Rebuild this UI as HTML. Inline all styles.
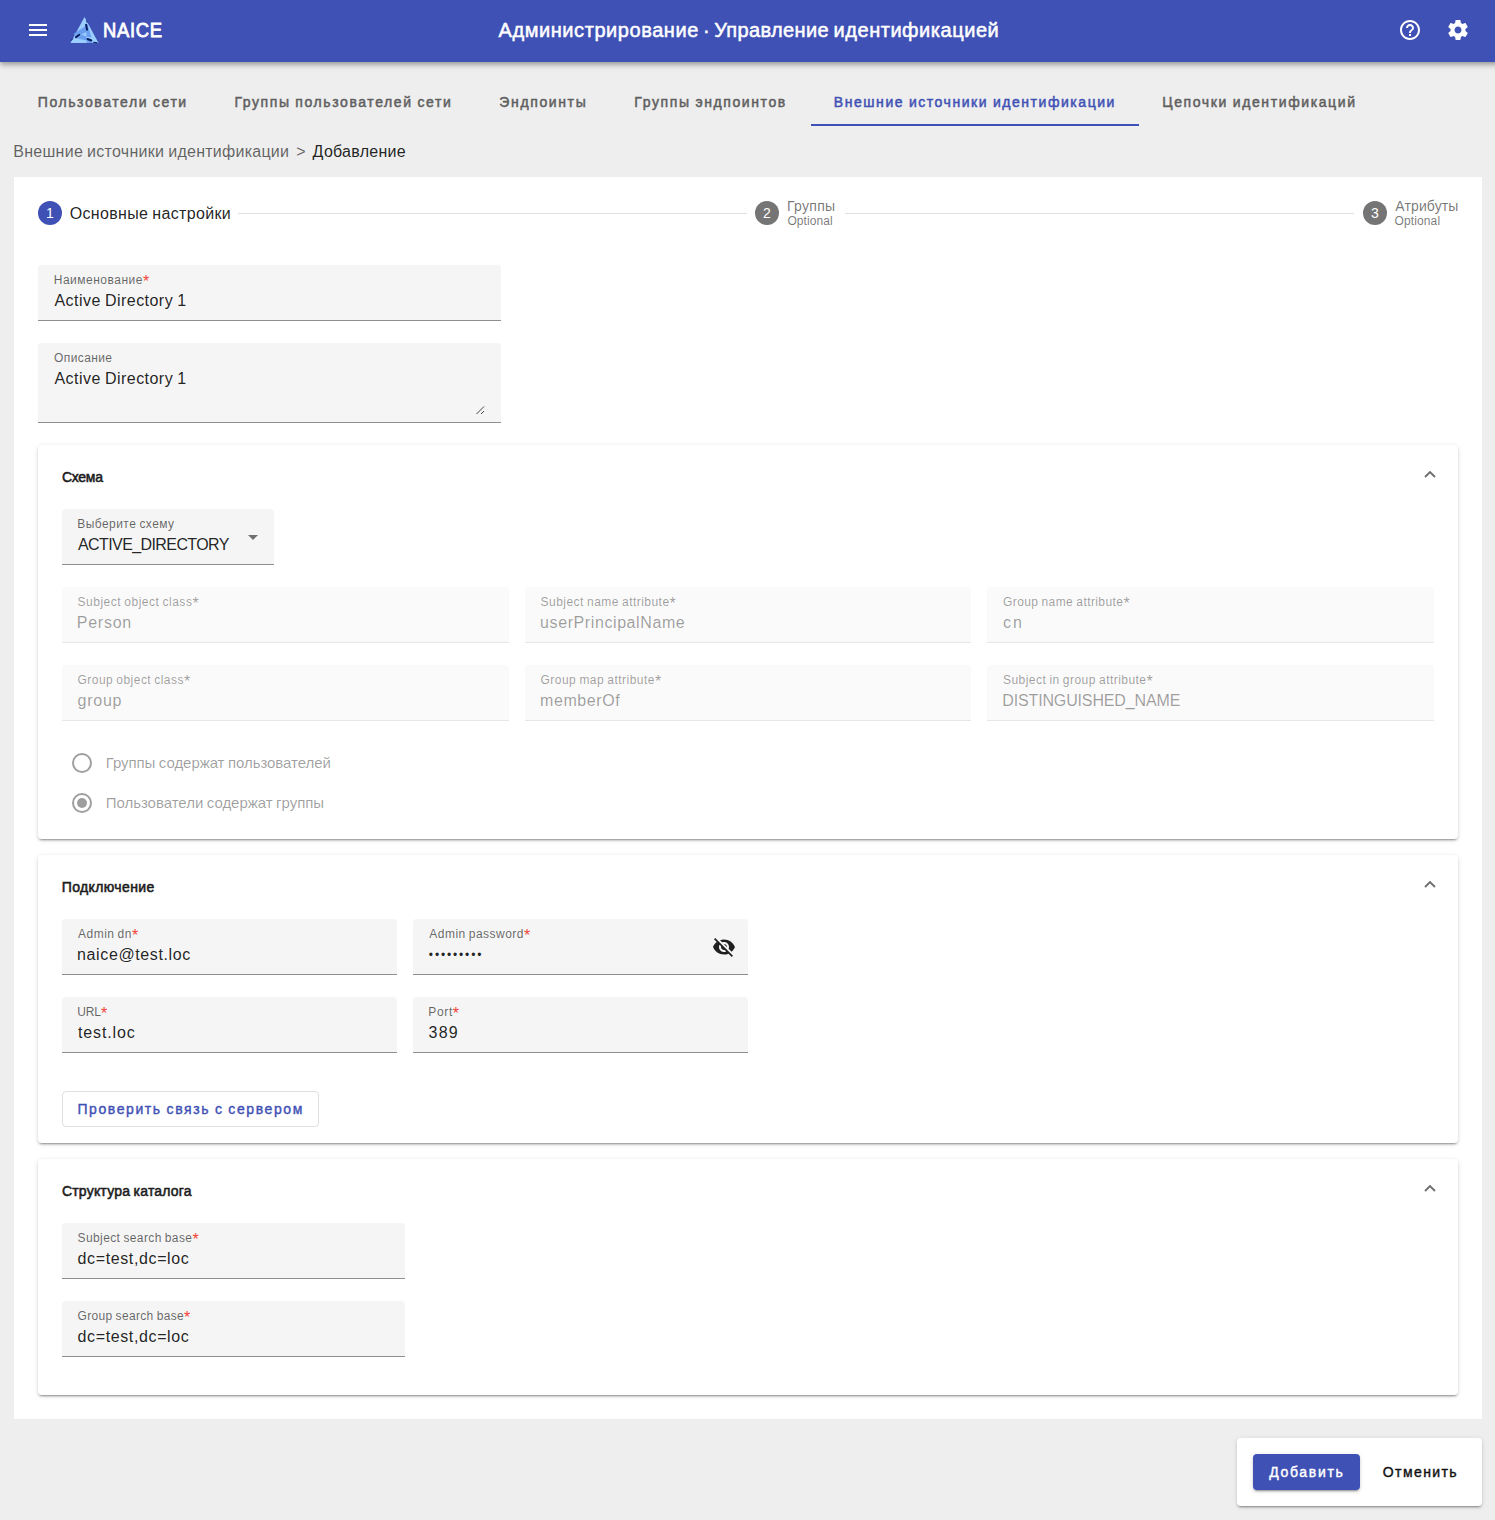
<!DOCTYPE html>
<html lang="ru">
<head>
<meta charset="utf-8">
<title>NAICE</title>
<style>
*{box-sizing:border-box;margin:0;padding:0}
html,body{width:1495px;height:1520px;overflow:hidden}
body{background:#eeeeee;font-family:"Liberation Sans",sans-serif;color:rgba(0,0,0,.87);position:relative;font-size:16px;word-spacing:-.04em}
.abs{position:absolute}
.t{position:absolute;white-space:nowrap;line-height:20px}
/* header */
#hdr{left:0;top:0;width:1530px;height:62px;background:#3f51b5;box-shadow:0 2px 4px -1px rgba(0,0,0,.2),0 3.5px 4.5px 0 rgba(0,0,0,.14),0 1px 9px 0 rgba(0,0,0,.12)}
#hdr .t{color:#fff;-webkit-text-stroke:.5px #fff;font-size:20px;line-height:24px}
/* tabs */
.tab{color:#5f5f5f;-webkit-text-stroke:.5px #5f5f5f;font-size:14px;letter-spacing:1.1px;top:92px}
.tab.act{color:#3f51b5;-webkit-text-stroke-color:#3f51b5}
#ink{left:811px;top:124px;width:328px;height:2px;background:#3f51b5}
/* crumbs */
.crumb{font-size:16px;top:142px;color:rgba(0,0,0,.6)}
/* card */
#card{left:14px;top:177px;width:1468px;height:1242px;background:#fff}
.panel{position:absolute;left:38px;width:1420px;background:#fff;border-radius:4px;box-shadow:0 3px 1px -2px rgba(0,0,0,.2),0 2px 2px 0 rgba(0,0,0,.14),0 1px 5px 0 rgba(0,0,0,.12)}
.ptitle{font-size:14px;color:#1c1c1c;-webkit-text-stroke:.55px #1c1c1c}
/* fields */
.f{position:absolute;height:56px;background:#f5f5f5;border-radius:4px 4px 0 0;border-bottom:1px solid rgba(0,0,0,.42)}
.f.dis{background:#fafafa;border-bottom-color:rgba(0,0,0,.08)}
.f .l{position:absolute;left:16px;top:7px;font-size:12px;line-height:16px;color:rgba(0,0,0,.6);white-space:nowrap;letter-spacing:.2px}
.f .l i{font-style:normal;color:#f44336;font-size:16px;line-height:0;position:relative;top:3px}
.f .v{position:absolute;left:16px;top:26px;font-size:16px;line-height:20px;color:rgba(0,0,0,.87);white-space:nowrap}
.f.dis .l,.f.dis .v,.f.dis .l i{color:rgba(0,0,0,.38)}
/* stepper */
.circ{position:absolute;width:24px;height:24px;border-radius:50%;color:#fff;font-size:14px;line-height:24px;text-align:center}
.sline{position:absolute;height:1px;background:#e0e0e0;top:213px}
/* radio */
.radio{position:absolute;width:20px;height:20px;border-radius:50%;border:2px solid rgba(0,0,0,.38)}
.rl{font-size:15px;color:rgba(0,0,0,.38);letter-spacing:.2px}
/*FIT*/
#brand{letter-spacing:0.743px;margin-left:-1.00px}
#tab1{letter-spacing:1.579px;margin-left:-0.25px}
#tab2{letter-spacing:1.580px;margin-left:-0.60px}
#tab3{letter-spacing:1.625px;margin-left:0.35px}
#tab4{letter-spacing:1.599px;margin-left:-0.65px}
#tab5{letter-spacing:1.543px;margin-left:-1.15px}
#tab6{letter-spacing:1.604px;margin-left:-0.75px}
#cr1{letter-spacing:0.260px;margin-left:-0.70px}
#cr2{letter-spacing:0.000px;margin-left:0.25px}
#cr3{letter-spacing:0.265px;margin-left:-0.40px}
#st1{letter-spacing:0.322px;margin-left:-0.25px}
#st2{letter-spacing:0.306px;margin-left:-0.05px}
#st2o{letter-spacing:0.059px;margin-left:0.45px}
#st3{letter-spacing:0.108px;margin-left:0.35px}
#st3o{letter-spacing:0.109px;margin-left:-0.40px}
#l_name{letter-spacing:0.494px;margin-left:-0.25px}
#v_name{letter-spacing:0.450px;margin-left:0.50px}
#l_desc{letter-spacing:0.405px;margin-left:0.00px}
#v_desc{letter-spacing:0.450px;margin-left:0.50px}
#pt1{letter-spacing:-0.281px;margin-left:-0.05px}
#l_sel{letter-spacing:0.439px;margin-left:-0.70px}
#v_sel{letter-spacing:-0.597px;margin-left:0.05px}
#l_soc{letter-spacing:0.502px;margin-left:-0.45px}
#v_soc{letter-spacing:0.738px;margin-left:-1.20px}
#l_sna{letter-spacing:0.464px;margin-left:-0.45px}
#v_sna{letter-spacing:0.593px;margin-left:-0.95px}
#l_gna{letter-spacing:0.413px;margin-left:0.00px}
#v_gna{letter-spacing:1.890px;margin-left:0.00px}
#l_goc{letter-spacing:0.458px;margin-left:-0.45px}
#v_goc{letter-spacing:0.755px;margin-left:-0.45px}
#l_gma{letter-spacing:0.467px;margin-left:-0.45px}
#v_gma{letter-spacing:0.584px;margin-left:-0.95px}
#l_sga{letter-spacing:0.462px;margin-left:0.00px}
#v_sga{letter-spacing:-0.141px;margin-left:-0.75px}
#r1{letter-spacing:-0.051px;margin-left:-0.35px}
#r2{letter-spacing:-0.025px;margin-left:-0.35px}
#pt2{letter-spacing:0.386px;margin-left:-0.30px}
#l_adn{letter-spacing:0.471px;margin-left:0.05px}
#v_adn{letter-spacing:0.618px;margin-left:-0.95px}
#l_apw{letter-spacing:0.461px;margin-left:0.35px}
#v_apw{letter-spacing:1.839px;margin-left:-0.15px}
#l_url{letter-spacing:-0.145px;margin-left:-0.70px}
#v_url{letter-spacing:0.847px;margin-left:0.05px}
#l_port{letter-spacing:0.615px;margin-left:-0.65px}
#v_port{letter-spacing:1.194px;margin-left:-0.40px}
#t_chk{letter-spacing:1.587px;margin-left:-0.60px}
#pt3{letter-spacing:0.197px;margin-left:-0.05px}
#l_ssb{letter-spacing:0.387px;margin-left:-0.45px}
#v_ssb{letter-spacing:0.621px;margin-left:-0.45px}
#l_gsb{letter-spacing:0.332px;margin-left:-0.45px}
#v_gsb{letter-spacing:0.621px;margin-left:-0.45px}
#t_add{letter-spacing:1.683px;margin-left:0.20px}
#t_cancel{letter-spacing:1.421px;margin-left:-0.25px}
#ti_a{letter-spacing:0.568px;margin-left:0.55px}
#ti_d{letter-spacing:0.000px;margin-left:0.10px}
#ti_b{letter-spacing:0.365px;margin-left:0.15px}
#ti_c{letter-spacing:0.536px;margin-left:-0.45px}
/*ENDFIT*/
</style>
</head>
<body>
<div id="hdr" class="abs">
  <svg class="abs" style="left:26px;top:18px" width="24" height="24" viewBox="0 0 24 24"><path fill="#fff" d="M3 18h18v-2H3v2zm0-5h18v-2H3v2zm0-7v2h18V6H3z"/></svg>
  <svg class="abs" id="logo" style="left:66px;top:12px" width="38" height="36" viewBox="0 0 38 36">
    <polygon points="18.5,5 32.5,30.9 4.45,30.9" fill="#9bcdff"/>
    <polygon points="19.3,14.2 20.3,20.1 15.3,22.4 7.6,21.7" fill="#6a9ff0"/>
    <polygon points="21.2,11.2 25.4,25.6 20.6,24.4 20.3,20.1" fill="#6a9ff0"/>
    <polygon points="15.3,22.4 12.2,26.7 20.8,28.6 20.8,30.9 27,30.9 21,26.7 20.6,24.4" fill="#6a9ff0"/>
    <polygon points="7.6,21.7 15.3,22.4 12.2,26.7 9,25.8" fill="#6a9ff0" opacity=".7"/>
    <g stroke="#041a5e" fill="none" stroke-linecap="round">
      <path d="M20.4 8.8L21.1 10.4M5.1 28.2L7.1 26.6" stroke-width="1" opacity=".75"/>
      <path d="M20.1 12.8L21 17.8M10 25.1L13.3 22.8M21.6 27L25.3 28.5" stroke-width="2"/>
      <path d="M27.6 30.3L31 30.7" stroke-width="1.1"/>
    </g>
  </svg>
  <span class="t" id="brand" style="left:104px;top:18px;transform:scaleX(.92);transform-origin:0 0;-webkit-text-stroke:.8px #fff">NAICE</span>
  <span class="t" id="ti_a" style="left:498px;top:18px">Администрирование</span>
  <span class="t" id="ti_d" style="left:703px;top:18px">·</span>
  <span class="t" id="ti_b" style="left:714px;top:18px">Управление</span>
  <span class="t" id="ti_c" style="left:834px;top:18px">идентификацией</span>
  <svg class="abs" style="left:1398px;top:18px" width="24" height="24" viewBox="0 0 24 24"><path fill="#fff" d="M11 18h2v-2h-2v2zm1-16C6.48 2 2 6.48 2 12s4.48 10 10 10 10-4.480 10-10S17.52 2 12 2zm0 18c-4.410 0-8-3.590-8-8s3.590-8 8-8 8 3.590 8 8-3.590 8-8 8zm0-14c-2.210 0-4 1.790-4 4h2c0-1.100.9-2 2-2s2 .9 2 2c0 2-3 1.750-3 5h2c0-2.250 3-2.500 3-5 0-2.210-1.790-4-4-4z"/></svg>
  <svg class="abs" style="left:1446px;top:18px" width="24" height="24" viewBox="0 0 24 24"><path fill="#fff" d="M19.43 12.98c.04-.32.07-.64.07-.98s-.03-.66-.07-.98l2.11-1.650c.19-.15.24-.42.12-.64l-2-3.460c-.12-.22-.39-.3-.61-.22l-2.49 1c-.52-.4-1.080-.73-1.690-.98l-.38-2.650C14.46 2.18 14.25 2 14 2h-4c-.25 0-.46.18-.49.42l-.38 2.650c-.61.25-1.170.59-1.690.98l-2.490-1c-.23-.09-.49 0-.61.22l-2 3.460c-.13.22-.07.49.12.64l2.110 1.650c-.04.32-.07.65-.07.98s.03.66.07.98l-2.110 1.650c-.19.15-.24.42-.12.64l2 3.460c.12.22.39.3.61.22l2.490-1c.52.4 1.080.73 1.690.98l.38 2.650c.03.24.24.42.49.42h4c.25 0 .46-.18.49-.42l.38-2.650c.61-.25 1.170-.59 1.690-.98l2.490 1c.23.09.49 0 .61-.22l2-3.460c.12-.22.07-.49-.12-.64l-2.110-1.650zM12 15.500c-1.930 0-3.500-1.570-3.500-3.500s1.570-3.500 3.500-3.500 3.500 1.570 3.500 3.500-1.570 3.500-3.500 3.500z"/></svg>
</div>

<span class="t tab" id="tab1" style="left:38px">Пользователи сети</span>
<span class="t tab" id="tab2" style="left:235px">Группы пользователей сети</span>
<span class="t tab" id="tab3" style="left:499px">Эндпоинты</span>
<span class="t tab" id="tab4" style="left:635px">Группы эндпоинтов</span>
<span class="t tab act" id="tab5" style="left:835px">Внешние источники идентификации</span>
<span class="t tab" id="tab6" style="left:1163px">Цепочки идентификаций</span>
<div id="ink" class="abs"></div>

<span class="t crumb" id="cr1" style="left:14px">Внешние источники идентификации</span>
<span class="t crumb" id="cr2" style="left:296px">&gt;</span>
<span class="t crumb" id="cr3" style="left:313px;color:rgba(0,0,0,.87)">Добавление</span>

<div id="card" class="abs"></div>
<div class="circ" id="c1" style="left:38px;top:201px;background:#3f51b5">1</div>
<span class="t" id="st1" style="left:70px;top:204px;font-size:16px">Основные настройки</span>
<div class="sline" style="left:238px;width:509px"></div>
<div class="circ" id="c2" style="left:755px;top:201px;background:#757575">2</div>
<span class="t" id="st2" style="left:787px;top:198px;font-size:14px;line-height:16px;color:rgba(0,0,0,.54)">Группы</span>
<span class="t" id="st2o" style="left:787px;top:214px;font-size:12px;line-height:14px;color:rgba(0,0,0,.54)">Optional</span>
<div class="sline" style="left:845px;width:509px"></div>
<div class="circ" id="c3" style="left:1363px;top:201px;background:#757575">3</div>
<span class="t" id="st3" style="left:1395px;top:198px;font-size:14px;line-height:16px;color:rgba(0,0,0,.54)">Атрибуты</span>
<span class="t" id="st3o" style="left:1395px;top:214px;font-size:12px;line-height:14px;color:rgba(0,0,0,.54)">Optional</span>

<div class="f" style="left:38px;top:265px;width:463px"><span class="l" id="l_name">Наименование<i>*</i></span><span class="v" id="v_name">Active Directory 1</span></div>
<div class="f" style="left:38px;top:343px;width:463px;height:80px"><span class="l" id="l_desc">Описание</span><span class="v" id="v_desc">Active Directory 1</span>
<svg class="abs" style="left:437px;top:62px" width="10" height="10" viewBox="0 0 10 10"><path d="M1.5 9 L9 1.5 M6 9 L9 6" stroke="#444" stroke-width="1" fill="none"/></svg></div>

<div class="panel" id="p1" style="top:445px;height:394px">
<span class="t ptitle" id="pt1" style="left:24px;top:22px">Схема</span>
<svg class="abs" style="left:1386px;top:25px" width="12" height="8" viewBox="0 0 12 8"><path fill="none" stroke="#6e6e6e" stroke-width="1.9" d="M1 7L6 2L11 7"/></svg>
<div class="f" style="left:24px;top:64px;width:212px"><span class="l" id="l_sel">Выберите схему</span><span class="v" id="v_sel">ACTIVE_DIRECTORY</span>
<svg class="abs" style="left:186px;top:26px" width="10" height="5" viewBox="0 0 10 5"><path d="M0 0l5 5 5-5z" fill="rgba(0,0,0,.54)"/></svg></div>
<div class="f dis" style="left:24px;top:142px;width:447px"><span class="l" id="l_soc">Subject object class<i>*</i></span><span class="v" id="v_soc">Person</span></div>
<div class="f dis" style="left:487px;top:142px;width:446px"><span class="l" id="l_sna">Subject name attribute<i>*</i></span><span class="v" id="v_sna">userPrincipalName</span></div>
<div class="f dis" style="left:949px;top:142px;width:447px"><span class="l" id="l_gna">Group name attribute<i>*</i></span><span class="v" id="v_gna">cn</span></div>
<div class="f dis" style="left:24px;top:220px;width:447px"><span class="l" id="l_goc">Group object class<i>*</i></span><span class="v" id="v_goc">group</span></div>
<div class="f dis" style="left:487px;top:220px;width:446px"><span class="l" id="l_gma">Group map attribute<i>*</i></span><span class="v" id="v_gma">memberOf</span></div>
<div class="f dis" style="left:949px;top:220px;width:447px"><span class="l" id="l_sga">Subject in group attribute<i>*</i></span><span class="v" id="v_sga">DISTINGUISHED_NAME</span></div>
<div class="radio" style="left:34px;top:308px"></div>
<span class="t rl" id="r1" style="left:68px;top:308px">Группы содержат пользователей</span>
<div class="radio" style="left:34px;top:348px"><div style="position:absolute;left:3px;top:3px;width:10px;height:10px;border-radius:50%;background:rgba(0,0,0,.38)"></div></div>
<span class="t rl" id="r2" style="left:68px;top:348px">Пользователи содержат группы</span>
</div>

<div class="panel" id="p2" style="top:855px;height:288px">
<span class="t ptitle" id="pt2" style="left:24px;top:22px">Подключение</span>
<svg class="abs" style="left:1386px;top:25px" width="12" height="8" viewBox="0 0 12 8"><path fill="none" stroke="#6e6e6e" stroke-width="1.9" d="M1 7L6 2L11 7"/></svg>
<div class="f" style="left:24px;top:64px;width:335px"><span class="l" id="l_adn">Admin dn<i>*</i></span><span class="v" id="v_adn">naice@test.loc</span></div>
<div class="f" style="left:375px;top:64px;width:335px"><span class="l" id="l_apw">Admin password<i>*</i></span><span class="v" id="v_apw" style="font-size:12px;top:26px">•••••••••</span>
<svg class="abs" id="eye" style="left:299px;top:16px" width="24" height="24" viewBox="0 0 24 24"><path fill="rgba(0,0,0,.87)" d="M12 7c2.760 0 5 2.240 5 5 0 .650-.130 1.260-.360 1.830l2.920 2.920c1.510-1.260 2.700-2.890 3.430-4.750-1.730-4.390-6-7.500-11-7.500-1.400 0-2.740.250-3.980.7l2.160 2.160C10.740 7.130 11.350 7 12 7zM2 4.270l2.280 2.280.46.46C3.080 8.300 1.780 10.020 1 12c1.730 4.390 6 7.500 11 7.500 1.550 0 3.030-.3 4.380-.840l.42.42L19.730 22 21 20.730 3.270 3 2 4.270zM7.530 9.800l1.550 1.550c-.050.210-.080.430-.080.650 0 1.660 1.340 3 3 3 .220 0 .440-.030.650-.080l1.550 1.550c-.670.330-1.410.530-2.200.530-2.760 0-5-2.240-5-5 0-.790.2-1.530.530-2.200zm4.310-.780l3.150 3.150.020-.160c0-1.660-1.340-3-3-3l-.170.010z"/></svg></div>
<div class="f" style="left:24px;top:142px;width:335px"><span class="l" id="l_url">URL<i>*</i></span><span class="v" id="v_url">test.loc</span></div>
<div class="f" style="left:375px;top:142px;width:335px"><span class="l" id="l_port">Port<i>*</i></span><span class="v" id="v_port">389</span></div>
<div class="abs" id="btnchk" style="left:24px;top:236px;width:257px;height:36px;border:1px solid rgba(0,0,0,.12);border-radius:4px"></div>
<span class="t" id="t_chk" style="left:40px;top:244px;font-size:14px;-webkit-text-stroke:.4px #3f51b5;color:#3f51b5">Проверить связь с сервером</span>
</div>

<div class="panel" id="p3" style="top:1159px;height:236px">
<span class="t ptitle" id="pt3" style="left:24px;top:22px">Структура каталога</span>
<svg class="abs" style="left:1386px;top:25px" width="12" height="8" viewBox="0 0 12 8"><path fill="none" stroke="#6e6e6e" stroke-width="1.9" d="M1 7L6 2L11 7"/></svg>
<div class="f" style="left:24px;top:64px;width:343px"><span class="l" id="l_ssb">Subject search base<i>*</i></span><span class="v" id="v_ssb">dc=test,dc=loc</span></div>
<div class="f" style="left:24px;top:142px;width:343px"><span class="l" id="l_gsb">Group search base<i>*</i></span><span class="v" id="v_gsb">dc=test,dc=loc</span></div>
</div>

<div class="abs" id="actions" style="left:1237px;top:1438px;width:245px;height:68px;background:#fff;border-radius:4px;box-shadow:0 3px 1px -2px rgba(0,0,0,.2),0 2px 2px 0 rgba(0,0,0,.14),0 1px 5px 0 rgba(0,0,0,.12)"></div>
<div class="abs" id="btnadd" style="left:1253px;top:1454px;width:107px;height:36px;background:#3f51b5;border-radius:4px;box-shadow:0 3px 1px -2px rgba(0,0,0,.2),0 2px 2px 0 rgba(0,0,0,.14),0 1px 5px 0 rgba(0,0,0,.12)"></div>
<span class="t" id="t_add" style="left:1269px;top:1462px;font-size:14px;-webkit-text-stroke:.4px #fff;color:#fff">Добавить</span>
<span class="t" id="t_cancel" style="left:1383px;top:1462px;font-size:14px;-webkit-text-stroke:.4px #111;color:#111">Отменить</span>

</body>
</html>
